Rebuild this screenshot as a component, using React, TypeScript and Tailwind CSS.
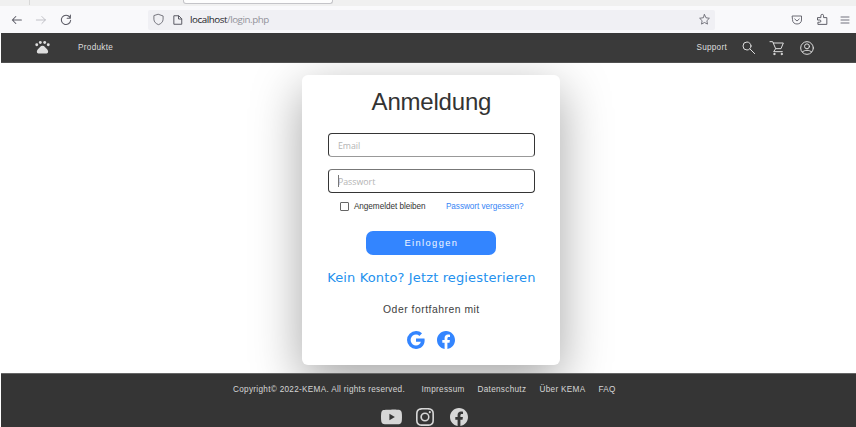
import type { ReactNode } from "react";
import { BsFacebook, BsGoogle, BsInstagram, BsYoutube } from "react-icons/bs";

function Line({ size, children, className = "" }: { size: number; children: ReactNode; className?: string }) {
  return (
    <svg width={size} height={size} viewBox="0 0 24 24" fill="none" stroke="currentColor" strokeWidth="1.5" strokeLinejoin="round" strokeLinecap="round" className={`shrink-0 ${className}`}>
      {children}
    </svg>
  );
}

function Paw() {
  return (
    <svg width="15" height="15" viewBox="0 0 24 24" fill="currentColor" className="shrink-0">
      <circle cx="2.800" cy="7.500" r="2.300" /><circle cx="8.500" cy="4" r="2.300" />
      <circle cx="15.500" cy="4" r="2.300" /><circle cx="21.200" cy="7.500" r="2.300" />
      <path d="M12 9c3.500 0 4.500 3.500 7 5.500 3 3 2.500 7-.5 7h-13c-3 0-3.500-4-.5-7 2.500-2 3.500-5.500 7-5.500z" />
    </svg>
  );
}

function BrowserBar() {
  return (
    <div className="h-[33px] bg-[#f9f9fb] text-[#5b5b65]">
      <div className="flex h-[6px] bg-[#f0f0f0]">
        <div className="ml-[29px] h-[5px] w-px bg-[#d8d8d8]" />
        <div className="ml-[153px] h-[4px] w-[150px] rounded-b-[3px] border border-t-0 border-[#c4c4c8] bg-[#fdfdfd]" />
      </div>
      <div className="flex h-[27px] items-center pl-[10px]">
        <Line size={14}><path d="M19.500 12H4M10 6l-6 6 6 6" strokeWidth="1.800" /></Line>
        <Line size={14} className="ml-[10px] text-[#b8b8bf]"><path d="M4 12h15.500M13.500 6l6 6-6 6" /></Line>
        <Line size={14} className="ml-[11px]"><path d="M18.500 7A8 8 0 1 0 20 12.500M19.500 3.500V9H14" strokeWidth="1.800" /></Line>
        <div className="ml-[75px] flex h-[20px] w-[567px] items-center rounded-[2px] bg-[#f0f0f4] pl-[4px]">
          <Line size={13}><path d="M12 2.500l8.500 3v6c0 5-4 8.500-8.500 10-4.500-1.500-8.500-5-8.500-10v-6z" /></Line>
          <Line size={12} className="ml-[7px]"><path d="M4.500 3.500h9l6 6v11h-15zM13 4v6h6" strokeWidth="2" /></Line>
          <div className="ml-[6px] w-[90px] whitespace-nowrap pt-px font-['Open_Sans','Noto_Sans',sans-serif] text-[9.800px] leading-[14px] tracking-[-0.450px] text-[#92929a]">
            <span className="text-[#25252b]">localhost</span>/login.php
          </div>
          <Line size={13} className="ml-[418px]"><path d="M12 3l2.700 5.800 6.300.9-4.600 4.500 1.100 6.300-5.500-3-5.500 3 1.100-6.300L3 9.700l6.300-.9z" /></Line>
        </div>
        <Line size={12} className="ml-[76px]"><path d="M3 4h18v8c0 5-4 8-9 8s-9-3-9-8zM7.500 10l4.500 4 4.500-4" strokeWidth="1.800" /></Line>
        <Line size={13} className="ml-[13px]"><path d="M3.500 8.500H9V5a2.500 2.500 0 0 1 5 0v3.500h6v12.500h-16.500v-4H7a2 2 0 0 0 0-4H3.500z" strokeWidth="1.800" /></Line>
        <Line size={12} className="ml-[10px]"><path d="M4 6h16M4 12h16M4 18h16" strokeWidth="1.700" /></Line>
      </div>
    </div>
  );
}

function Navbar() {
  return (
    <nav className="ml-px flex h-[30px] items-center border-b border-[#505050] bg-[#3a3a3a] pl-[34px] font-['Liberation_Sans',Arial,sans-serif] text-[8.200px] text-[#dedede]">
      <Paw />
      <span className="ml-[28px] w-[36px] pt-[2px] tracking-[0.300px]">Produkte</span>
      <span className="ml-[582.500px] w-[32px] pt-[2px] tracking-[0.250px]">Support</span>
      <Line size={16} className="ml-[12px]"><circle cx="9" cy="9" r="6" /><path d="M13.500 13.500l7 7" /></Line>
      <Line size={16} className="ml-[12px]">
        <path d="M1.500 2.500h4l4.500 10.500h8l3.500-8.500H6.500M10 13l-3 4.500h13" />
        <circle cx="8" cy="21" r="1" fill="currentColor" /><circle cx="19" cy="21" r="1" fill="currentColor" />
      </Line>
      <Line size={16} className="ml-[14px]"><circle cx="12" cy="12" r="9.500" /><circle cx="12" cy="9.500" r="3.700" /><path d="M5 18c4-3.500 10-3.500 14 0" /></Line>
    </nav>
  );
}

const fieldClass = "block h-[24px] w-[207px] rounded-[4px] border border-[#353535] bg-white pl-[9px] pt-px font-['Open_Sans','Noto_Sans',sans-serif] text-[8.800px] text-[#333] outline-none placeholder:text-[#b4b4b4]";

function LoginCard() {
  return (
    <form className="flex h-[290px] w-[258px] flex-col items-center rounded-[6px] bg-white font-['Liberation_Sans',Arial,sans-serif] shadow-[0_15px_50px_rgba(0,0,0,0.360)]" onSubmit={(e) => e.preventDefault()}>
      <h1 className="mt-[13px] whitespace-nowrap text-[24px] leading-[28px] tracking-[-0.200px] text-[#333]">Anmeldung</h1>
      <input className={`mt-[17px] border-b-[#999] ${fieldClass}`} placeholder="Email" />
      <div className="relative mt-[12px]">
        <input type="password" className={`border-t-[#777] ${fieldClass}`} placeholder="Passwort" />
        <span className="absolute left-[10px] top-[6px] h-[12px] w-px bg-[#777]" />
      </div>
      <div className="mt-[8px] flex h-[11px] w-[207px] items-center whitespace-nowrap pl-[12px] text-[8.200px] tracking-[-0.040px]">
        <span className="size-[9px] shrink-0 rounded-[1px] border border-[#666]" />
        <label className="ml-[5px] w-[72px] pt-[2px] text-[#333]">Angemeldet bleiben</label>
        <a className="ml-[20px] pt-[2px] text-[#3785f5]">Passwort vergessen?</a>
      </div>
      <button className="mt-[19px] h-[24px] w-[130px] rounded-[7px] bg-[#3385ff] pt-[2px] text-[9.300px] tracking-[1.400px] text-[#f2f7ff]">Einloggen</button>
      <a className="mt-[14px] whitespace-nowrap font-['DejaVu_Sans',Verdana,sans-serif] text-[13px] leading-[17px] tracking-[0.140px] text-[#2491ee]">Kein Konto? Jetzt regiesterieren</a>
      <p className="mt-[17px] whitespace-nowrap text-[10.400px] leading-[14px] tracking-[0.500px] text-[#414141]">Oder fortfahren mit</p>
      <div className="mt-[14px] flex gap-[12px] text-[#3385ff]">
        <BsGoogle className="size-[18px]" />
        <BsFacebook className="size-[18px]" />
      </div>
    </form>
  );
}

function Footer() {
  return (
    <footer className="relative ml-px h-[54px] border-t border-[#666] bg-[#353535] font-['Liberation_Sans',Arial,sans-serif] text-[8.200px] text-[#d6d6d6]">
      <div className="flex whitespace-nowrap pl-[232px] pt-[10px] leading-[12px] tracking-[0.300px]">
        <span className="w-[188.500px]">Copyright© 2022-KEMA. All rights reserved.</span>
        <span className="w-[56px]">Impressum</span>
        <span className="w-[62px]">Datenschutz</span>
        <span className="w-[59px]">Über KEMA</span>
        <span>FAQ</span>
      </div>
      <div className="mt-[12px] flex h-[18px] items-center overflow-hidden pl-[380px]">
        <BsYoutube className="size-[21px] shrink-0" />
        <BsInstagram className="ml-[14px] size-[18px] shrink-0" />
        <BsFacebook className="ml-[16px] size-[18px] shrink-0" />
      </div>
    </footer>
  );
}

export default function App() {
  return (
    <div className="h-[427px] w-[856px] overflow-hidden bg-white">
      <BrowserBar />
      <Navbar />
      <main className="flex h-[310px] overflow-hidden pl-[302.400px] pt-[12px]">
        <LoginCard />
      </main>
      <Footer />
    </div>
  );
}
